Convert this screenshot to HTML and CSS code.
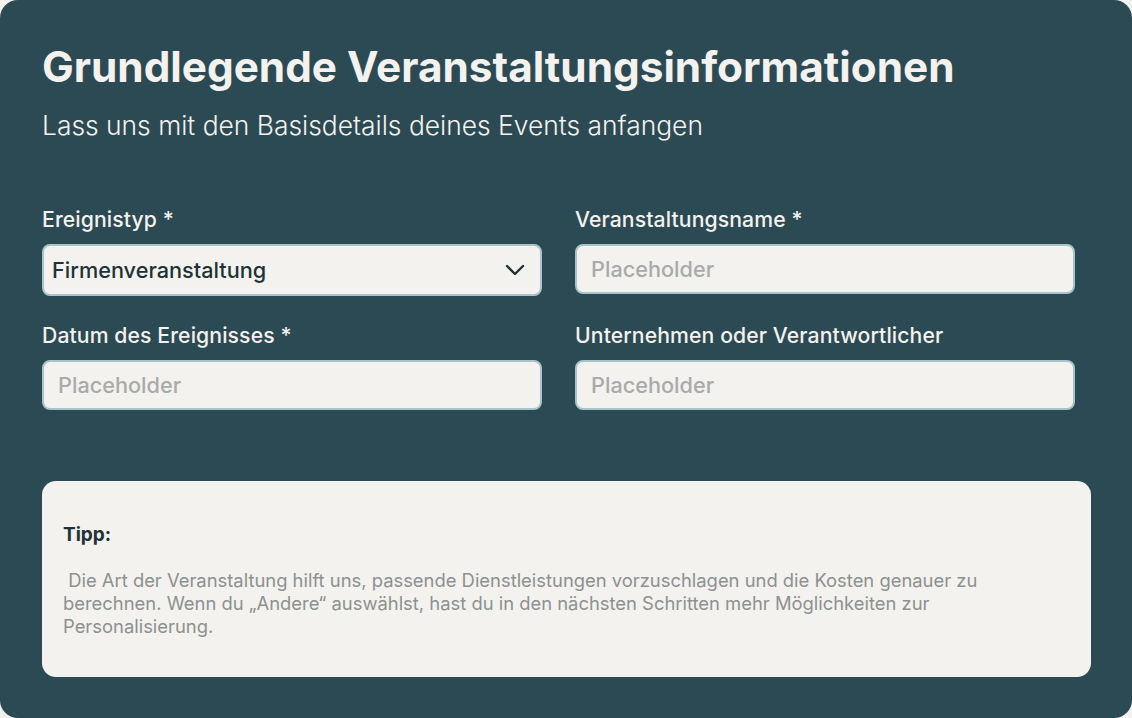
FILE: index.html
```html
<!DOCTYPE html>
<html lang="de">
<head>
    <meta charset="UTF-8">
    <meta name="viewport" content="width=device-width, initial-scale=1.0">
    <title>Grundlegende Veranstaltungsinformationen</title>
    <link rel="stylesheet" href="styles.css">
</head>
<body>
    <div class="card">
        <h1>Grundlegende Veranstaltungsinformationen</h1>
        <p class="subtitle">Lass uns mit den Basisdetails deines Events anfangen</p>

        <form class="fields">
            <div class="field">
                <label>Ereignistyp *</label>
                <div class="select">
                    <span>Firmenveranstaltung</span>
                    <svg width="20" height="12" viewBox="0 0 20 12" fill="none">
                        <path d="M2 2 L10 10 L18 2" stroke="#1e3238" stroke-width="2.4" stroke-linecap="round" stroke-linejoin="round"/>
                    </svg>
                </div>
            </div>
            <div class="field">
                <label>Veranstaltungsname *</label>
                <input type="text" placeholder="Placeholder">
            </div>
            <div class="field">
                <label>Datum des Ereignisses *</label>
                <input type="text" placeholder="Placeholder">
            </div>
            <div class="field">
                <label>Unternehmen oder Verantwortlicher</label>
                <input type="text" placeholder="Placeholder">
            </div>
        </form>

        <div class="tip">
            <h4>Tipp:</h4>
            <p>&nbsp;Die Art der Veranstaltung hilft uns, passende Dienstleistungen vorzuschlagen und die Kosten genauer zu berechnen. Wenn du „Andere“ auswählst, hast du in den nächsten Schritten mehr Möglichkeiten zur Personalisierung.</p>
        </div>
    </div>
</body>
</html>
```

FILE: styles.css
```css
body {
    margin: 0;
    background-color: #f4f2ee;
    font-family: Inter, "Noto Sans", sans-serif;
}
.card {
    width: 1132px;
    height: 718px;
    box-sizing: border-box;
    background-color: #2c4a54;
    border-radius: 18px;
    padding: 42px 41px 41px 42px;
    color: #f4f2ee;
}
h1 {
    margin: 0;
    font-size: 42.3px;
    line-height: 50px;
    font-weight: 700;
}
.subtitle {
    margin: 17px 0 0;
    font-size: 26.4px;
    line-height: 32px;
    font-weight: 300;
}
.fields {
    width: 1033px;
    margin-top: 66px;
    display: grid;
    grid-template-columns: 500px 500px;
    column-gap: 33px;
    row-gap: 27px;
}
.field {
    display: flex;
    flex-direction: column;
    gap: 13px;
}
.field label {
    font-size: 21.2px;
    line-height: 24px;
    font-weight: 500;
    letter-spacing: 0.1px;
}
.field input,
.select {
    height: 50px;
    box-sizing: border-box;
    border: 2px solid #a8c3ca;
    border-radius: 8px;
    background-color: #f4f2ee;
    font-family: Inter, "Noto Sans", sans-serif;
    font-size: 21.7px;
    font-weight: 500;
    color: #1e3238;
    outline: none;
}
.field input {
    padding: 0 14px;
}
.field input::placeholder {
    color: #a9abaa;
}
.select {
    height: 52px;
    display: flex;
    align-items: center;
    justify-content: space-between;
    padding: 0 15px 0 8px;
}
.select svg {
    display: block;
}
.tip {
    margin-top: 71px;
    background-color: #f4f2ee;
    border-radius: 14px;
    padding: 43px 21px 39px;
}
.tip h4 {
    margin: 0;
    font-size: 19px;
    line-height: 22px;
    font-weight: 700;
    color: #1e3238;
}
.tip p {
    margin: 23px 0 0;
    max-width: 960px;
    font-size: 18.4px;
    line-height: 23px;
    color: #8c9191;
}
```
